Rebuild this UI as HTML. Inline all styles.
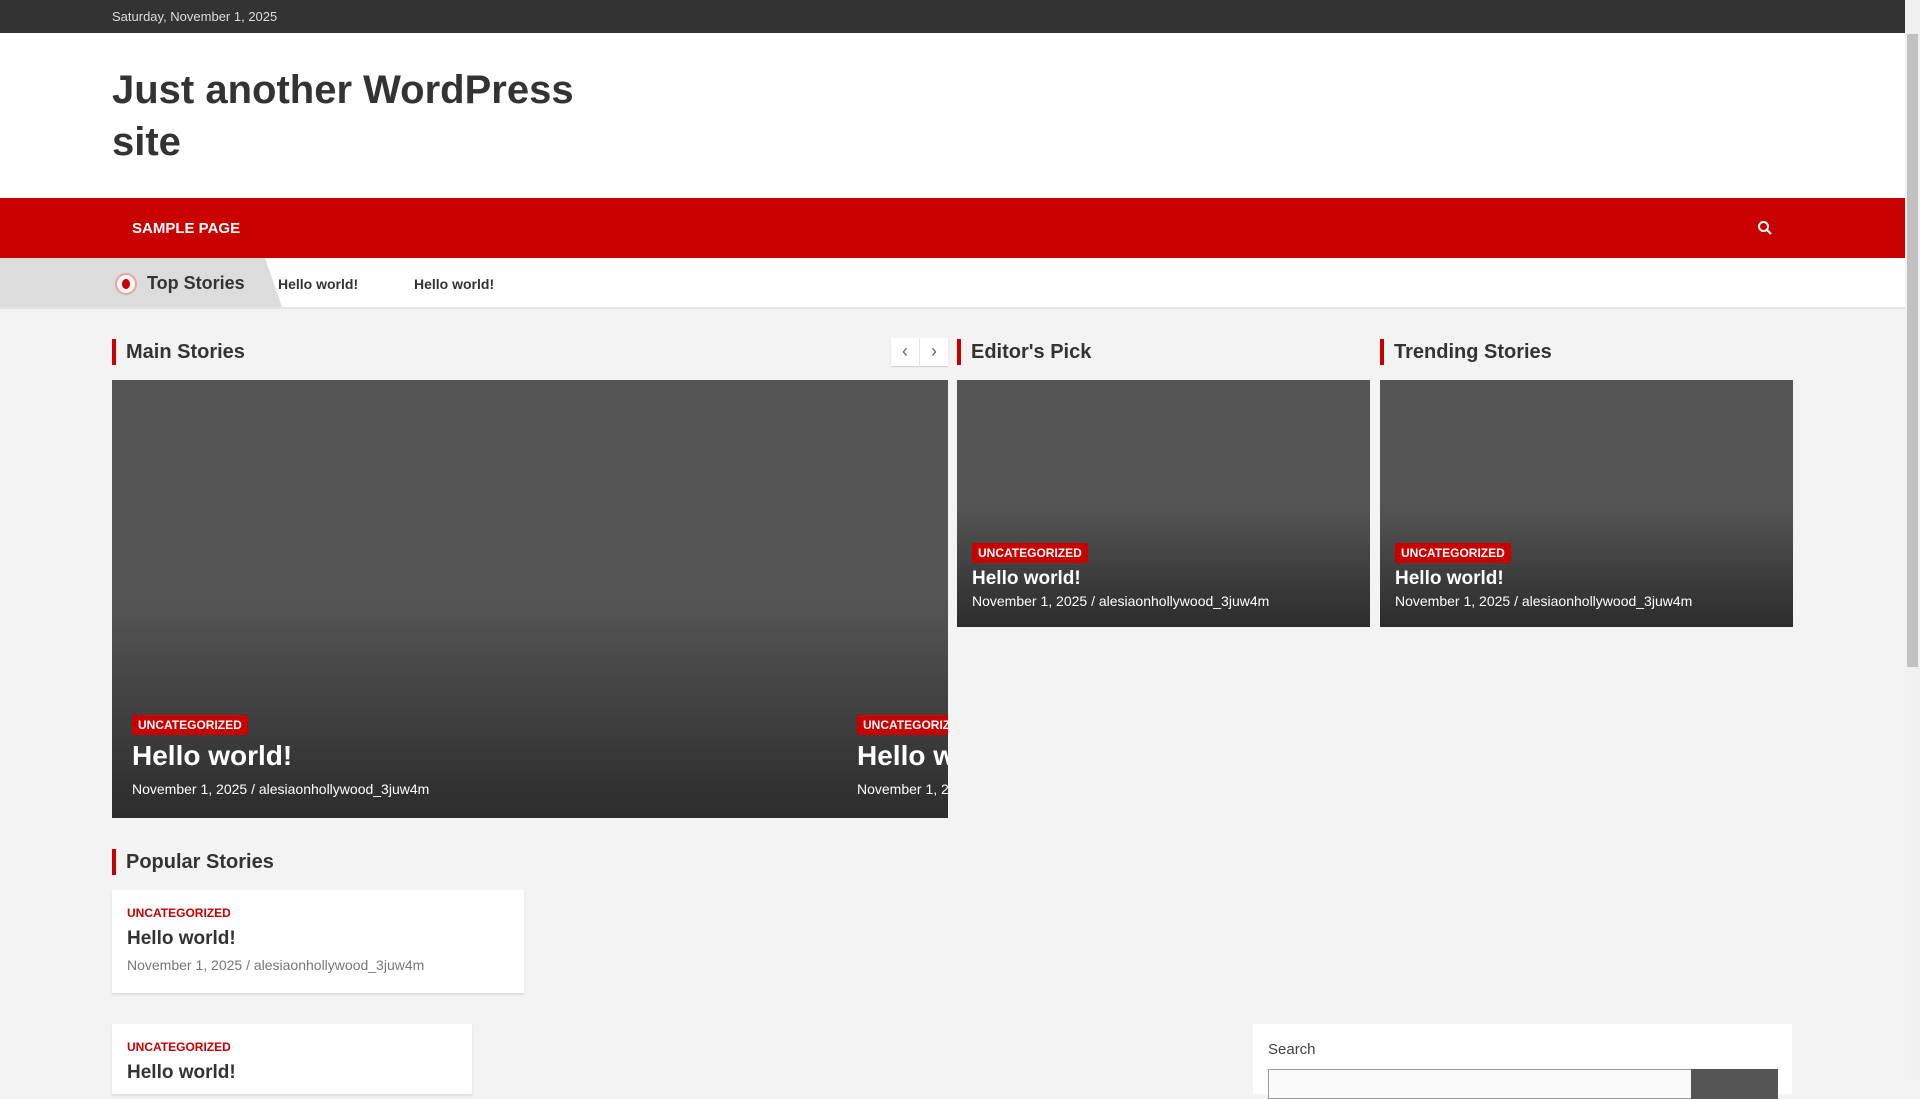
<!DOCTYPE html>
<html><head><meta charset="utf-8"><style>
*{margin:0;padding:0;box-sizing:border-box}
body{width:1920px;height:1080px;overflow:hidden;background:#f3f3f3;font-family:"Liberation Sans",sans-serif;position:relative;color:#333}
.a{position:absolute;white-space:nowrap}
.topbar{left:0;top:0;width:1905px;height:33px;background:#333}
.hdr{left:0;top:33px;width:1905px;height:165px;background:#fff}
.nav{left:0;top:198px;width:1905px;height:60px;background:#c80000}
.tick{left:0;top:258px;width:1905px;height:51px;background:#fff;border-bottom:2px solid #e4e4e4}
.sec{font-size:20px;font-weight:bold;color:#333;border-left:4px solid #c80000;padding-left:10px;height:26px;line-height:26px}
.dark{background:linear-gradient(to bottom,#555 0%,#555 50%,#2c2c2c 100%);overflow:hidden}
.badge{background:#c80000;color:#fff;font-size:12px;font-weight:bold;padding:3px 6px;border-radius:2px;display:inline-block}
.wt{color:#fff;font-weight:bold}
.meta{color:#fff;font-size:14px}
.card{background:#fff;box-shadow:0 2px 2px #ddd}
.cat{color:#c80000;font-size:12px;font-weight:bold}
</style></head><body>
<div class="a topbar"><div class="a" style="left:112px;top:9px;color:#ddd;font-size:13px">Saturday, November 1, 2025</div></div>
<div class="a hdr"><div class="a" style="left:112px;top:31px;font-size:40px;font-weight:bold;line-height:52px;color:#333">Just another WordPress<br>site</div></div>
<div class="a nav"><div class="a" style="left:132px;top:22px;color:#fff;font-size:15px;font-weight:bold">SAMPLE PAGE</div>
<svg class="a" style="left:1757px;top:22px" width="16" height="16" viewBox="0 0 16 16"><circle cx="6.5" cy="6.5" r="4.5" fill="none" stroke="#fff" stroke-width="2"/><path d="M10 10l4 4" stroke="#fff" stroke-width="2.2"/></svg></div>
<div class="a tick">
<div class="a" style="left:0;top:0;width:282px;height:49px;background:#dcdcdc;clip-path:polygon(0 0,265px 0,282px 49px,0 49px)"></div>
<div class="a" style="left:115px;top:15px;width:22px;height:22px;border:2px solid #e5a5a5;border-radius:50%;background:#f4f4f4"><div class="a" style="left:5px;top:4px;width:8px;height:10px;border-radius:50%;background:#c80000"></div></div>
<div class="a" style="left:147px;top:15px;font-size:18px;font-weight:bold;color:#333">Top Stories</div>
<div class="a" style="left:278px;top:18px;font-size:14px;font-weight:bold;color:#333">Hello world!</div>
<div class="a" style="left:414px;top:18px;font-size:14px;font-weight:bold;color:#333">Hello world!</div>
</div>
<div class="a sec" style="left:112px;top:339px">Main Stories</div>
<div class="a" style="left:891px;top:338px;width:28px;height:28px;background:#fff;box-shadow:0 1px 1px #ccc;color:#666;font-size:18px;text-align:center;line-height:26px">&#x2039;</div>
<div class="a" style="left:920px;top:338px;width:28px;height:28px;background:#fff;box-shadow:0 1px 1px #ccc;color:#666;font-size:18px;text-align:center;line-height:26px">&#x203A;</div>
<div class="a sec" style="left:957px;top:339px">Editor's Pick</div>
<div class="a sec" style="left:1380px;top:339px">Trending Stories</div>
<div class="a dark" style="left:112px;top:380px;width:836px;height:438px">
<div class="a" style="left:20px;top:335px"><span class="badge">UNCATEGORIZED</span></div>
<div class="a wt" style="left:20px;top:360px;font-size:28px">Hello world!</div>
<div class="a meta" style="left:20px;top:401px">November 1, 2025 / alesiaonhollywood_3juw4m</div>
<div class="a" style="left:745px;top:335px"><span class="badge">UNCATEGORIZED</span></div>
<div class="a wt" style="left:745px;top:360px;font-size:28px">Hello world!</div>
<div class="a meta" style="left:745px;top:401px">November 1, 2025 / alesiaonhollywood_3juw4m</div>
</div>
<div class="a dark" style="left:957px;top:380px;width:413px;height:247px">
<div class="a" style="left:15px;top:163px"><span class="badge">UNCATEGORIZED</span></div>
<div class="a wt" style="left:15px;top:188px;font-size:19px">Hello world!</div>
<div class="a meta" style="left:15px;top:213px">November 1, 2025 / alesiaonhollywood_3juw4m</div>
</div>
<div class="a dark" style="left:1380px;top:380px;width:413px;height:247px">
<div class="a" style="left:15px;top:163px"><span class="badge">UNCATEGORIZED</span></div>
<div class="a wt" style="left:15px;top:188px;font-size:19px">Hello world!</div>
<div class="a meta" style="left:15px;top:213px">November 1, 2025 / alesiaonhollywood_3juw4m</div>
</div>
<div class="a sec" style="left:112px;top:849px">Popular Stories</div>
<div class="a card" style="left:112px;top:890px;width:412px;height:103px">
<div class="a cat" style="left:15px;top:16px">UNCATEGORIZED</div>
<div class="a" style="left:15px;top:38px;font-size:19px;font-weight:bold;color:#333">Hello world!</div>
<div class="a" style="left:15px;top:67px;font-size:14px;color:#777">November 1, 2025 / alesiaonhollywood_3juw4m</div>
</div>
<div class="a card" style="left:112px;top:1024px;width:360px;height:70px">
<div class="a cat" style="left:15px;top:16px">UNCATEGORIZED</div>
<div class="a" style="left:15px;top:38px;font-size:19px;font-weight:bold;color:#333">Hello world!</div>
</div>
<div class="a" style="left:1253px;top:1024px;width:539px;height:70px;background:#fff">
<div class="a" style="left:15px;top:17px;font-size:15px;color:#444">Search</div>
<div class="a" style="left:15px;top:45px;width:424px;height:30px;border:1px solid #999;background:#fafafa"></div>
<div class="a" style="left:438px;top:45px;width:87px;height:30px;background:#555"></div>
</div>
<div class="a" style="left:1905px;top:0;width:15px;height:1080px;background:#f1f1f1"><div class="a" style="left:2px;top:34px;width:11px;height:633px;background:#c1c1c1"></div></div>
</body></html>
